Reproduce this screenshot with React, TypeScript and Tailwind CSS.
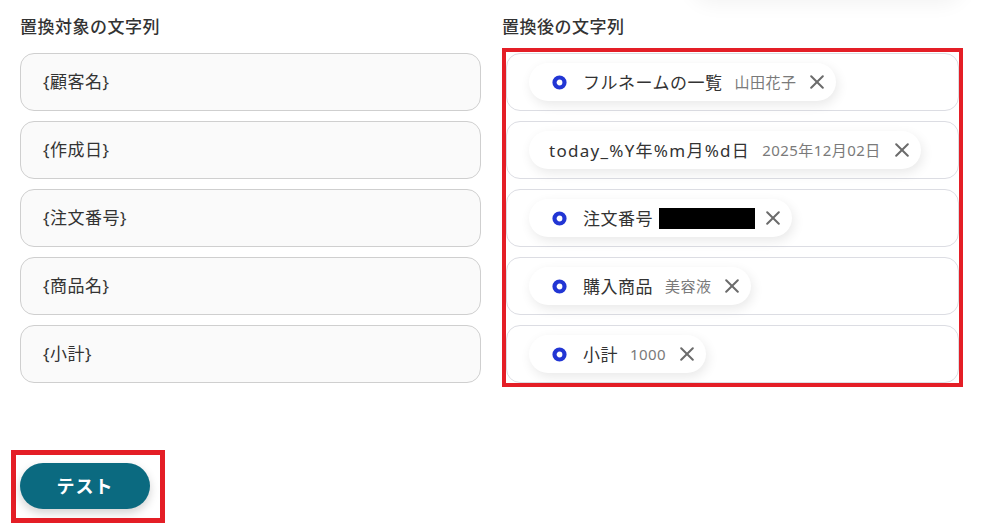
import React from "react";

const leftItems = ["{顧客名}", "{作成日}", "{注文番号}", "{商品名}", "{小計}"];

type Chip = { icon: boolean; label: string; value?: string; redacted?: boolean; wide?: boolean };

const chips: Chip[] = [
  { icon: true, label: "フルネームの一覧", value: "山田花子" },
  { icon: false, label: "today_%Y年%m月%d日", value: "2025年12月02日", wide: true },
  { icon: true, label: "注文番号", redacted: true },
  { icon: true, label: "購入商品", value: "美容液" },
  { icon: true, label: "小計", value: "1000" },
];

function RingIcon() {
  return (
    <svg width="15" height="15" viewBox="0 0 15 15" className="shrink-0">
      <circle cx="7.5" cy="7.5" r="5" fill="none" stroke="#2236d4" strokeWidth="4.2" />
    </svg>
  );
}

function CloseIcon() {
  return (
    <svg width="14" height="14" viewBox="0 0 14 14" className="shrink-0">
      <path d="M1.2 1.2 L12.8 12.8 M12.8 1.2 L1.2 12.8" stroke="#6b6b6b" strokeWidth="2" strokeLinecap="round" />
    </svg>
  );
}

function ChipView({ chip }: { chip: Chip }) {
  return (
    <div
      className={`flex h-[38px] items-center rounded-full bg-white pr-[12px] shadow-[2px_4px_12px_rgba(0,0,0,0.09)] ${
        chip.icon ? "pl-[23px]" : "pl-[20px]"
      }`}
    >
      {chip.icon && (
        <span className="mr-[16px] flex">
          <RingIcon />
        </span>
      )}
      <span
        className={`text-[17px] leading-none text-[#333] ${chip.wide ? "tracking-[0.075em]" : "tracking-[0.03em]"}`}
      >
        {chip.label}
      </span>
      {chip.redacted ? (
        <span className="ml-[6px] h-[21px] w-[96px] bg-black" />
      ) : (
        <span className="ml-[12px] text-[15px] leading-none tracking-[0.03em] text-[#7a7a7a]">{chip.value}</span>
      )}
      <span className={`${chip.redacted ? "ml-[11px]" : "ml-[14px]"} flex`}>
        <CloseIcon />
      </span>
    </div>
  );
}

export default function App() {
  return (
    <div className="relative h-[523px] w-[982px] overflow-hidden bg-white font-['Noto_Sans','Noto_Sans_CJK_JP',sans-serif]">
      <div className="pointer-events-none absolute left-[690px] top-[-62px] h-[62px] w-[275px] rounded-[24px] bg-white shadow-[0_4px_20px_rgba(0,0,0,0.05)]" />
      <div className="flex gap-[21px] pl-[20px] pt-[15px]">
        <div className="flex w-[461px] flex-col">
          <div className="h-[24px] text-[17px] font-medium leading-[24px] tracking-[0.03em] text-[#333]">
            置換対象の文字列
          </div>
          <div className="mt-[14px] flex flex-col gap-[10px]">
            {leftItems.map((t) => (
              <div
                key={t}
                className="flex h-[58px] items-center rounded-[14px] border border-[#cfcfcf] bg-[#fafafa] pl-[22px] text-[17px] tracking-[0.03em] text-[#333]"
              >
                {t}
              </div>
            ))}
          </div>
        </div>
        <div className="flex w-[461px] flex-col">
          <div className="h-[24px] text-[17px] font-medium leading-[24px] tracking-[0.03em] text-[#333]">
            置換後の文字列
          </div>
          <div className="mt-[9px] flex flex-col gap-[10px] border-4 border-[#e41e26] pt-[1px]">
            {chips.map((c, i) => (
              <div
                key={i}
                className="flex h-[58px] items-center rounded-[14px] border border-[#dcdde3] bg-white pl-[22px]"
              >
                <ChipView chip={c} />
              </div>
            ))}
          </div>
        </div>
      </div>
      <div className="mt-[63px] pl-[11px]">
        <div className="inline-flex border-[5px] border-[#e41e26] pb-[9px] pl-[4px] pr-[10px] pt-[8px]">
          <button className="flex h-[46px] w-[130px] items-center justify-center rounded-full bg-[#0b6a80] text-[18px] font-bold tracking-[0.06em] text-white shadow-[0_4px_10px_rgba(0,0,0,0.18)]">
            テスト
          </button>
        </div>
      </div>
    </div>
  );
}
